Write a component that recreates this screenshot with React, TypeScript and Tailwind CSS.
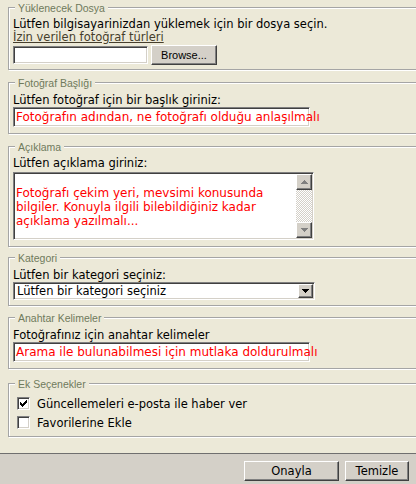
import React from "react";

const SUNKEN =
  "border border-t-[#808080] border-l-[#808080] border-b-white border-r-white shadow-[inset_1px_1px_0_#404040,inset_-1px_-1px_0_#d4d0c8]";
const RAISED =
  "border border-t-white border-l-white border-b-[#404040] border-r-[#404040] shadow-[inset_-1px_-1px_0_#808080] bg-[#d4d0c8]";

function Group({
  title,
  className,
  children,
}: {
  title: string;
  className: string;
  children: React.ReactNode;
}) {
  return (
    <div
      className={`relative w-[416px] border border-[#a5a5a5] shadow-[inset_1px_1px_0_#fff,1px_1px_0_#fff] pl-[4px] ${className}`}
    >
      <span className="absolute left-[6px] top-[-6px] bg-[#ece9d8] px-[3px] text-[10.5px] leading-[13px] text-[#6f7a5c] font-['Liberation_Sans',Arial,sans-serif] whitespace-nowrap">
        {title}
      </span>
      {children}
    </div>
  );
}

function CheckMark() {
  // classic 7x7 tick
  return (
    <svg width="7" height="7" viewBox="0 0 7 7" shapeRendering="crispEdges">
      <path
        fill="#000"
        d="M6 0h1v3H6zM5 1h1v3H5zM4 2h1v3H4zM0 2h1v3H0zM1 3h1v3H1zM2 4h1v3H2zM3 3h1v3H3z"
      />
    </svg>
  );
}

function CheckBox({ checked }: { checked?: boolean }) {
  return (
    <div className={`w-[13px] h-[13px] bg-white flex items-center justify-center ${SUNKEN}`}>
      {checked ? <CheckMark /> : null}
    </div>
  );
}

function ArrowUp() {
  return (
    <svg width="7" height="4" viewBox="0 0 7 4" shapeRendering="crispEdges">
      <path fill="#808080" d="M3 0h1v1H3zM2 1h3v1H2zM1 2h5v1H1zM0 3h7v1H0z" />
    </svg>
  );
}

function ArrowDown({ color }: { color: string }) {
  return (
    <svg width="7" height="4" viewBox="0 0 7 4" shapeRendering="crispEdges">
      <path fill={color} d="M0 0h7v1H0zM1 1h5v1H1zM2 2h3v1H2zM3 3h1v1H3z" />
    </svg>
  );
}

export default function App() {
  return (
    <div className="w-[416px] h-[484px] overflow-hidden bg-[#ece9d8] flex flex-col font-['DejaVu_Sans',Verdana,sans-serif] text-black">
      <div className="flex-1 pl-[8px] pt-[7px] flex flex-col">
        <Group title="Yüklenecek Dosya" className="pt-[10px] pb-[4px]">
          <div className="text-[11.5px] leading-[13px] whitespace-nowrap">
            Lütfen bilgisayarinizdan yüklemek için bir dosya seçin.
          </div>
          <div className="text-[11.5px] leading-[13px] whitespace-nowrap">
            <a className="underline text-[#463e2c] cursor-pointer">İzin verilen fotoğraf türleri</a>
          </div>
          <div className="mt-[1px] h-[20px] flex items-center">
            <div className={`w-[135px] h-[18px] bg-white ${SUNKEN}`} />
            <button
              className={`ml-[3px] w-[66px] h-[20px] text-[11px] leading-[16px] text-black font-['Liberation_Sans',Arial,sans-serif] ${RAISED}`}
            >
              Browse...
            </button>
          </div>
        </Group>

        <Group title="Fotoğraf Başlığı" className="mt-[12px] pt-[11px] pb-[6px]">
          <div className="text-[11.5px] leading-[13px] whitespace-nowrap">
            Lütfen fotoğraf için bir başlık giriniz:
          </div>
          <div className={`w-[297px] h-[20px] bg-white flex items-center pl-[2px] ${SUNKEN}`}>
            <span className="text-[12px] leading-[14px] text-[#ff0000] whitespace-nowrap">
              Fotoğrafın adından, ne fotoğrafı olduğu anlaşılmalı
            </span>
          </div>
        </Group>

        <Group title="Açıklama" className="mt-[12px] pt-[10px] pb-[6px]">
          <div className="text-[11.5px] leading-[13px] whitespace-nowrap">Lütfen açıklama giriniz:</div>
          <div className={`mt-[2px] w-[301px] h-[68px] bg-white flex ${SUNKEN}`}>
            <div className="flex-1 pl-[2px] pt-[13px] text-[12px] leading-[14px] text-[#ff0000] whitespace-nowrap">
              Fotoğrafı çekim yeri, mevsimi konusunda
              <br />
              bilgiler. Konuyla ilgili bilebildiğiniz kadar
              <br />
              açıklama yazılmalı...
            </div>
            <div className="w-[16px] my-[1px] mr-[1px] flex flex-col">
              <div className={`h-[16px] flex items-center justify-center ${RAISED}`}>
                <ArrowUp />
              </div>
              <div className="flex-1 bg-[repeating-conic-gradient(#d4d0c8_0_25%,#ffffff_0_50%)] bg-[length:2px_2px]" />
              <div className={`h-[16px] flex items-center justify-center ${RAISED}`}>
                <ArrowDown color="#808080" />
              </div>
            </div>
          </div>
        </Group>

        <Group title="Kategori" className="mt-[10px] pt-[11px] pb-[5px]">
          <div className="text-[11.5px] leading-[13px] whitespace-nowrap">Lütfen bir kategori seçiniz:</div>
          <div className={`w-[302px] h-[18px] bg-white flex items-center justify-between pl-[3px] ${SUNKEN}`}>
            <span className="text-[11.5px] leading-[14px] whitespace-nowrap">Lütfen bir kategori seçiniz</span>
            <div className={`w-[15px] h-[14px] mr-[1px] flex items-center justify-center ${RAISED}`}>
              <ArrowDown color="#000" />
            </div>
          </div>
        </Group>

        <Group title="Anahtar Kelimeler" className="mt-[11px] pt-[11px] pb-[6px]">
          <div className="text-[11.5px] leading-[13px] whitespace-nowrap">
            Fotoğrafınız için anahtar kelimeler
          </div>
          <div className={`w-[297px] h-[20px] bg-white flex items-center pl-[2px] ${SUNKEN}`}>
            <span className="text-[12px] leading-[14px] text-[#ff0000] whitespace-nowrap">
              Arama ile bulunabilmesi için mutlaka doldurulmalı
            </span>
          </div>
        </Group>

        <Group title="Ek Seçenekler" className="mt-[14px] pt-[10px] pb-[4px]">
          <div className="h-[19px] flex items-center pl-[4px] gap-[7px]">
            <CheckBox checked />
            <span className="text-[11.5px] leading-[14px] whitespace-nowrap">
              Güncellemeleri e-posta ile haber ver
            </span>
          </div>
          <div className="h-[19px] flex items-center pl-[4px] gap-[7px]">
            <CheckBox />
            <span className="text-[11.5px] leading-[14px] whitespace-nowrap">Favorilerine Ekle</span>
          </div>
        </Group>
      </div>

      <div className="h-[31px] border-t border-[#6f6f6f] bg-[#d4d0c8] flex justify-end items-start pt-[7px] pr-[7px] gap-[6px]">
        <button className={`w-[95px] h-[20px] text-[11.5px] leading-[16px] text-black ${RAISED}`}>Onayla</button>
        <button className={`w-[64px] h-[20px] text-[11.5px] leading-[16px] text-black ${RAISED}`}>Temizle</button>
      </div>
    </div>
  );
}
